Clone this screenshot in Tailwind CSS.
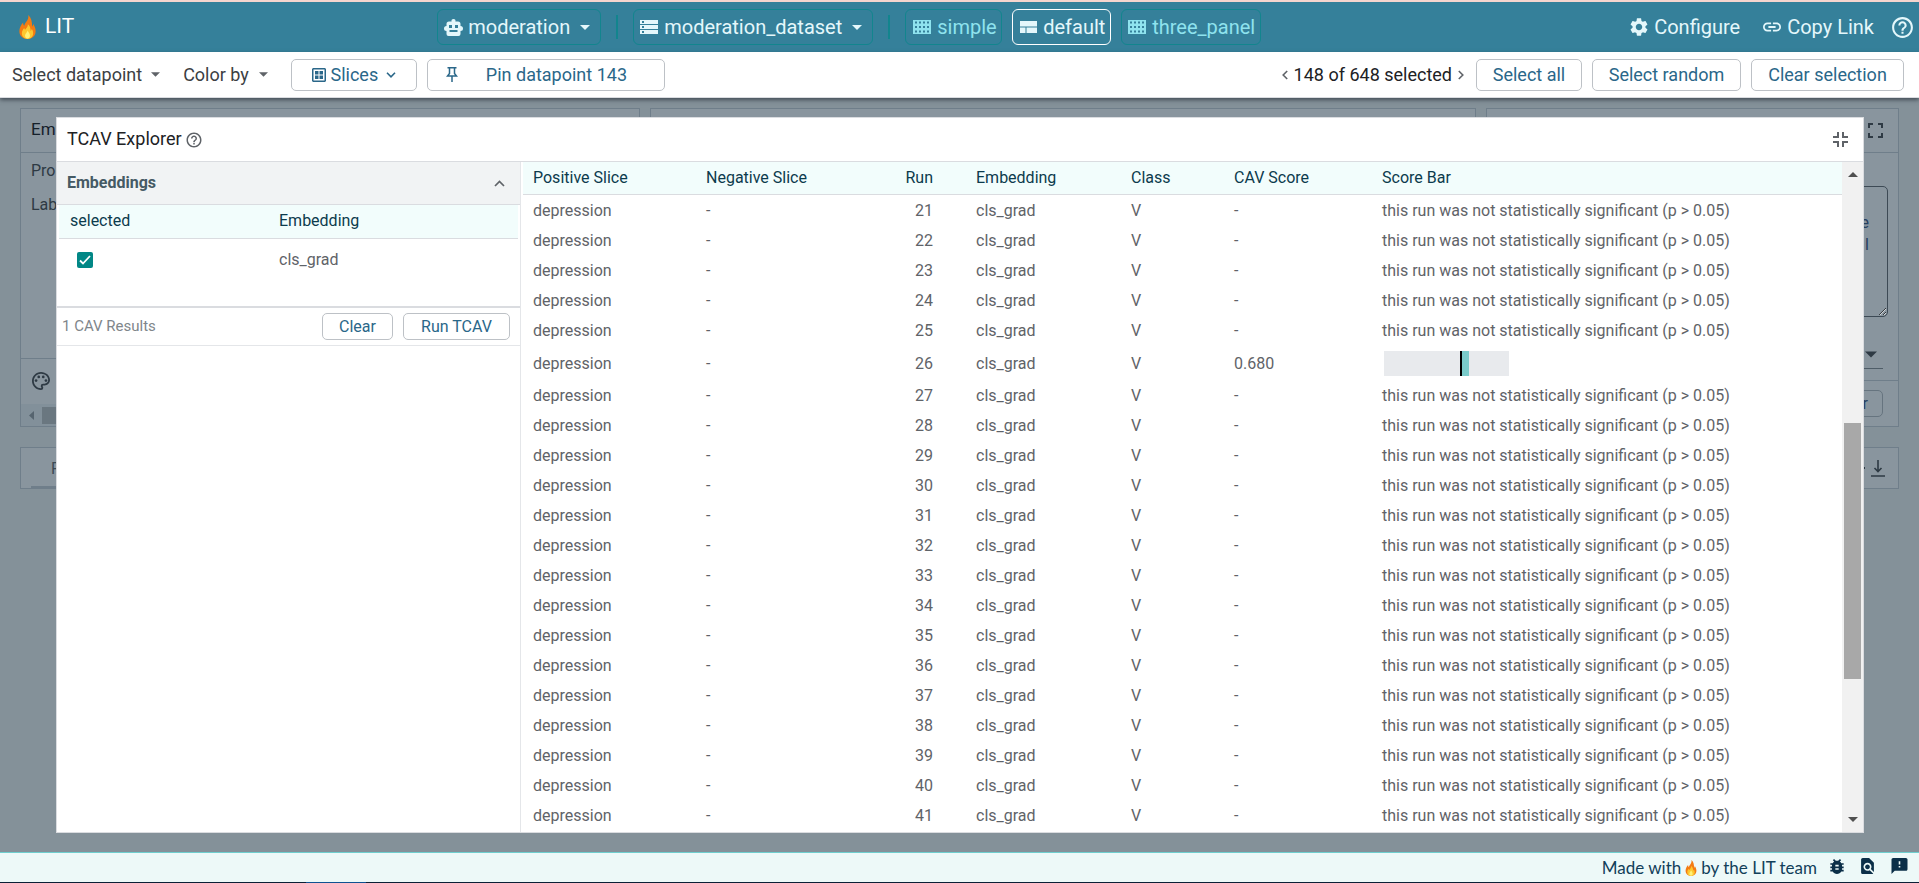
<!DOCTYPE html>
<html lang="en">
<head>
<meta charset="utf-8">
<title>LIT</title>
<script src="https://cdn.jsdelivr.net/npm/@tailwindcss/browser@4"></script>
</head>
<body class="h-screen flex flex-col overflow-hidden bg-white font-['Roboto',sans-serif] text-base">

<!-- Shared symbols -->
<svg class="hidden">
  <symbol id="flame" viewBox="0 0 24 34">
    <path fill="#f47b12" d="M13 0c1 5-1.500 8-4 11.500-.8 1.200-1.300 2.400-1.500 3.700C6.200 14.200 5.700 12.500 5.800 10.500 2.500 14 .5 18.500.5 23 .5 29.500 5.500 34 12 34s11.500-4.500 11.500-11c0-4-1.500-7.500-3.500-10.500 0 1.800-.4 3-1.400 4C18.500 9.500 17.500 4 13 0z"/>
    <path fill="#fdc72e" d="M12.500 13c.3 3.500-2 5.500-4 8-.6-.7-.9-1.500-1-2.500C5.500 20.500 4 23 4 26c0 4.500 3.500 8 8 8s8-3.300 8-8c0-2.500-.8-4.500-2-6-.2 1.200-.7 2-1.500 2.500 0-4-1.300-7.500-4-9.500z"/>
    <path fill="#fff176" d="M12 22c0 2.500-3.500 4-3.500 7.500 0 2.200 1.600 3.700 3.500 3.700s3.500-1.500 3.500-3.700C15.500 26.500 13.500 24.500 12 22z"/>
  </symbol>
  <symbol id="help" viewBox="0 0 24 24"><path fill="currentColor" d="M11 18h2v-2h-2v2zm1-16C6.480 2 2 6.480 2 12s4.480 10 10 10 10-4.480 10-10S17.520 2 12 2zm0 18c-4.410 0-8-3.590-8-8s3.590-8 8-8 8 3.590 8 8-3.590 8-8 8zm0-14c-2.210 0-4 1.790-4 4h2c0-1.100.9-2 2-2s2 .9 2 2c0 2-3 1.750-3 5h2c0-2.250 3-2.500 3-5 0-2.210-1.790-4-4-4z"/></symbol>
  <symbol id="caret" viewBox="0 0 10 5"><path fill="currentColor" d="M0 0h10L5 5z"/></symbol>
  <symbol id="grid" viewBox="0 0 18 14"><path fill="currentColor" fill-rule="evenodd" d="M0 0h18v14H0zM2 1.500v2h2v-2zM6 1.500v2h2v-2zM10 1.500v2h2v-2zM14 1.500v2h2v-2zM2 6v2h2V6zM6 6v2h2V6zM10 6v2h2V6zM14 6v2h2V6zM2 10.500v2h2v-2zM6 10.500v2h2v-2zM10 10.500v2h2v-2zM14 10.500v2h2v-2z"/></symbol>
</svg>

<div class="h-[2px] shrink-0 bg-[#f5d5ce]"></div>

<header class="h-[50px] shrink-0 flex items-center justify-between bg-[#35809a] pl-[19px] pr-[4px] text-[20px] text-[#e4f7fb]">
  <div class="flex items-center gap-[9px] text-white">
    <svg class="w-[17px] h-[24px]"><use href="#flame"/></svg>
    <span class="text-[21px]">LIT</span>
  </div>

  <nav class="flex items-center mr-[6px]">
    <button class="h-9 w-[164px] flex items-center rounded-md border border-[#12858e] pl-[6px] pr-[10px]">
      <svg class="w-[19px] h-[17px] mr-[5px]" viewBox="0 0 19 17"><path fill="currentColor" fill-rule="evenodd" d="M9.500 0a2 2 0 011.900 2.500H14A2.500 2.500 0 0116.500 5v2a2.500 2.500 0 010 5v3a2 2 0 01-2 2h-10a2 2 0 01-2-2v-3a2.500 2.500 0 010-5V5A2.500 2.500 0 015 2.500h2.600A2 2 0 019.500 0zM5 6v3h3V6zM11 6v3h3V6zM5.500 11v2h8v-2z"/></svg>
      <span>moderation</span>
      <svg class="w-[10px] h-[5px] ml-auto"><use href="#caret"/></svg>
    </button>
    <span class="w-[2px] h-6 mx-[15px] bg-[#12858e]"></span>
    <button class="h-9 w-[240px] flex items-center rounded-md border border-[#12858e] pl-[6px] pr-[10px]">
      <svg class="w-[18px] h-[14px] mr-[6px]" viewBox="0 0 18 14"><path fill="currentColor" fill-rule="evenodd" d="M0 0h18v4H0zM2 1v2h2V1zM0 5h18v4H0zM2 6v2h2V6zM0 10h18v4H0zM2 11v2h2v-2z"/></svg>
      <span>moderation_dataset</span>
      <svg class="w-[10px] h-[5px] ml-auto"><use href="#caret"/></svg>
    </button>
    <span class="w-[2px] h-6 mx-[15px] bg-[#12858e]"></span>
    <div class="flex gap-[10px]">
      <button class="h-9 w-[97px] flex items-center rounded-md border border-[#12858e] pl-[7px] gap-[6px] text-[#8fe3ee]">
        <svg class="w-[18px] h-[14px]"><use href="#grid"/></svg>simple
      </button>
      <button class="h-9 w-[99px] flex items-center rounded-md border border-white pl-[7px] gap-[6px]">
        <svg class="w-[17px] h-[12px]" viewBox="0 0 17 12"><path fill="currentColor" d="M0 0h17v5.500H0zM0 6.500h5.500V12H0zM6.500 6.500H17V12H6.500z"/></svg>default
      </button>
      <button class="h-9 w-[140px] flex items-center rounded-md border border-[#12858e] pl-[6px] gap-[6px] text-[#8fe3ee]">
        <svg class="w-[18px] h-[14px]"><use href="#grid"/></svg>three_panel
      </button>
    </div>
  </nav>

  <div class="flex items-center">
    <button class="flex items-center gap-[6px] mr-[23px]">
      <svg class="w-[18px] h-[18px]" viewBox="2 2 20 20"><path fill="currentColor" d="M19.140 12.940c.04-.3.060-.61.060-.94 0-.32-.02-.64-.07-.94l2.030-1.580c.18-.14.23-.41.12-.61l-1.920-3.320c-.12-.22-.37-.29-.59-.22l-2.390.96c-.5-.38-1.030-.7-1.620-.94l-.36-2.540c-.04-.24-.24-.41-.48-.41h-3.840c-.24 0-.43.17-.47.41l-.36 2.540c-.59.24-1.130.57-1.620.94l-2.390-.96c-.22-.08-.47 0-.59.22L2.740 8.870c-.12.21-.08.47.12.61l2.030 1.580c-.05.3-.09.63-.09.94s.02.64.070.94l-2.030 1.580c-.18.14-.23.41-.12.61l1.920 3.320c.12.22.37.29.59.22l2.390-.96c.5.38 1.030.7 1.620.94l.36 2.540c.05.24.24.41.48.41h3.840c.24 0 .44-.17.47-.41l.36-2.540c.59-.24 1.130-.56 1.620-.94l2.390.96c.22.080.47 0 .59-.22l1.920-3.320c.12-.22.070-.47-.12-.61l-2.010-1.580zM12 15.600c-1.980 0-3.600-1.620-3.600-3.600s1.620-3.600 3.600-3.600 3.600 1.620 3.600 3.600-1.620 3.600-3.600 3.600z"/></svg>
      Configure
    </button>
    <button class="flex items-center gap-[6px] mr-[16px]">
      <svg class="w-[18px] h-[10px]" viewBox="2 7 20 10"><path fill="currentColor" d="M3.900 12c0-1.710 1.390-3.100 3.100-3.100h4V7H7c-2.760 0-5 2.240-5 5s2.240 5 5 5h4v-1.900H7c-1.710 0-3.100-1.390-3.100-3.100zM8 13h8v-2H8v2zm9-6h-4v1.900h4c1.710 0 3.100 1.390 3.100 3.100s-1.390 3.100-3.100 3.100h-4V17h4c2.760 0 5-2.240 5-5s-2.240-5-5-5z"/></svg>
      Copy Link
    </button>
    <button aria-label="Help"><svg class="block w-[25px] h-[25px]"><use href="#help"/></svg></button>
  </div>
</header>

<div class="relative z-10 h-[46px] shrink-0 flex items-center justify-between border-b border-[#dadce0] bg-white pl-[12px] pr-[15px] text-[18px] text-[#3c4043] shadow-[0_2px_4px_rgba(40,48,58,0.7)]">
  <div class="flex items-center">
    <button class="flex items-center gap-[9px] mr-[23px]">Select datapoint <svg class="w-[9px] h-[5px] text-[#5f6368]"><use href="#caret"/></svg></button>
    <button class="flex items-center gap-[10px] mr-[23px]">Color by <svg class="w-[9px] h-[5px] text-[#5f6368]"><use href="#caret"/></svg></button>
    <button class="h-8 w-[126px] mr-[10px] flex items-center justify-center gap-[5px] rounded-[5px] border border-[#bdc1c6] text-[#2a6789]">
      <svg class="w-[14px] h-[14px]" viewBox="0 0 14 14" fill="currentColor"><path fill-rule="evenodd" d="M1 0h12l1 1v12l-1 1H1l-1-1V1zM1.500 1.500v11h11v-11z"/><path d="M3 3h3.500v3.500H3zM7.500 3H11v3.500H7.500zM3 7.500h3.500V11H3zM7.500 7.500H11V11H7.500z"/></svg>
      Slices
      <svg class="w-[10px] h-[6px] ml-[3px]" viewBox="0 0 10 6"><path fill="none" stroke="currentColor" stroke-width="1.600" d="M1 .8l4 4 4-4"/></svg>
    </button>
    <button class="h-8 w-[238px] flex items-center rounded-[5px] border border-[#bdc1c6] pl-[18px] gap-[28px] text-[#2a6789]">
      <svg class="w-[12px] h-[15px]" viewBox="0 0 12 15"><path fill="none" stroke="currentColor" stroke-width="1.500" d="M1.500 .8h9M3.500 1v5.500L1.500 9h9L8.500 6.500V1M6 9v6"/></svg>
      Pin datapoint 143
    </button>
  </div>
  <div class="flex items-center gap-[10px]">
    <div class="flex items-center gap-[6px] mr-[2px] text-[#202124]">
      <button aria-label="Previous datapoint"><svg class="w-[6px] h-[10px]" viewBox="0 0 6 10"><path fill="none" stroke="#5f6368" stroke-width="1.600" d="M5.200 1L1.200 5l4 4"/></svg></button>
      <span class="pb-px">148 of 648 selected</span>
      <button aria-label="Next datapoint"><svg class="w-[6px] h-[10px]" viewBox="0 0 6 10"><path fill="none" stroke="#5f6368" stroke-width="1.600" d="M.8 1l4 4-4 4"/></svg></button>
    </div>
    <button class="h-8 w-[106px] rounded-[5px] border border-[#bdc1c6] text-[#2a6789]">Select all</button>
    <button class="h-8 w-[149px] rounded-[5px] border border-[#bdc1c6] text-[#2a6789]">Select random</button>
    <button class="h-8 w-[153px] rounded-[5px] border border-[#bdc1c6] text-[#2a6789]">Clear selection</button>
  </div>
</div>

<main class="relative flex-1 min-h-0 bg-[#849199] px-5 pt-[10px] text-[#2e3a44]">
  <!-- Dimmed workspace behind the dialog -->
  <div class="grid grid-cols-[620fr_826fr_413fr] gap-[10px] h-[319px]">
    <section class="flex flex-col border border-[#6f7e8a] bg-[#89959e] overflow-hidden">
      <h2 class="h-[44px] shrink-0 border-b border-[#6f7e8a] pl-[10px] leading-[40px] text-[17px] text-[#15202a]">Em</h2>
      <div class="flex-1 pl-[10px] pt-[1px] leading-[34px]"><p>Pro</p><p>Lab</p></div>
      <div class="h-[46px] shrink-0 border-t border-[#6f7e8a] flex items-center pl-[11px] pb-[2px]">
        <svg class="w-[18px] h-[18px]" viewBox="2 2 20 20" fill="currentColor"><path d="M12 22C6.490 22 2 17.510 2 12S6.490 2 12 2s10 4.040 10 9c0 3.310-2.690 6-6 6h-1.770c-.28 0-.5.22-.5.5 0 .12.050.23.130.33.41.47.64 1.060.64 1.670A2.500 2.500 0 0112 22zm0-18c-4.410 0-8 3.590-8 8s3.590 8 8 8c.28 0 .5-.22.5-.5a.54.54 0 00-.14-.35c-.41-.46-.63-1.050-.63-1.650a2.500 2.500 0 012.500-2.500H16c2.210 0 4-1.790 4-4 0-3.860-3.590-7-8-7z"/><circle cx="6.500" cy="11.500" r="1.500"/><circle cx="9.500" cy="7.500" r="1.500"/><circle cx="14.500" cy="7.500" r="1.500"/><circle cx="17.500" cy="11.500" r="1.500"/></svg>
      </div>
      <div class="h-[22px] shrink-0 flex items-center bg-[#82909a] pl-[8px] gap-[8px]">
        <svg class="w-[5px] h-[9px]" viewBox="0 0 5 9"><path fill="#56646f" d="M5 0v9L0 4.500z"/></svg>
        <span class="h-[17px] w-80 bg-[#6a7780]"></span>
      </div>
    </section>
    <section class="border border-[#6f7e8a] bg-[#89959e]"></section>
    <section class="flex flex-col border border-[#6f7e8a] bg-[#89959e]">
      <div class="h-[44px] shrink-0 border-b border-[#6f7e8a] flex items-center justify-end pr-[15px]">
        <svg class="w-[15px] h-[15px]" viewBox="0 0 15 15"><path fill="none" stroke="currentColor" stroke-width="2" d="M1 5V1h4M10 1h4v4M14 10v4h-4M5 14H1v-4"/></svg>
      </div>
      <div class="flex-1 flex flex-col pt-[33px] pl-4 pr-[10px]">
        <textarea aria-label="Text" class="h-[131px] shrink-0 w-full rounded-[5px] border border-[#3d4a55] pt-[25px] pr-[18px] text-right text-[#274060] leading-[22px]">e
l</textarea>
        <div class="mr-[5px] mt-[17px] h-[35px] border-b border-[#4f5d68] flex items-center justify-end pr-[6px] pt-[6px]"><svg class="w-[12px] h-[7px]"><use href="#caret"/></svg></div>
      </div>
      <div class="h-[46px] shrink-0 border-t border-[#6f7e8a] flex items-center justify-end pr-[15px]">
        <button class="h-[27px] w-[70px] rounded-[5px] border border-[#66747f] text-[#274060] text-right pr-[14px]">r</button>
      </div>
    </section>
  </div>
  <section class="mt-5 h-[42px] border border-[#6f7e8a] bg-[#89959e] flex items-center justify-between pl-[10px] pr-[13px]">
    <div class="h-full w-52 border-b-2 border-[#6f7e8a] pl-[20px] leading-[42px] text-[#3c4a55]">P</div>
    <div class="flex items-center gap-[6px]">
      <span class="size-[2px] bg-[#2e3a44]"></span>
      <svg class="w-[14px] h-[17px]" viewBox="0 0 14 17"><path fill="none" stroke="currentColor" stroke-width="1.600" d="M7 0v11M3.500 8L7 11.500 10.500 8M0 16h14"/></svg>
    </div>
  </section>

  <!-- Dialog -->
  <div role="dialog" aria-label="TCAV Explorer" class="absolute left-14 right-[55px] top-[19px] bottom-[19px] flex flex-col border border-[#dadce0] bg-white">
    <div class="h-[44px] shrink-0 flex items-center justify-between border-b border-[#dadce0] pl-[10px] pr-[15px]">
      <div class="flex items-center gap-[3px]">
        <h1 class="pb-[2px] text-[18px] text-[#202124]">TCAV Explorer</h1>
        <svg class="w-[18px] h-[18px] text-[#5f6368]"><use href="#help"/></svg>
      </div>
      <button aria-label="Exit full screen"><svg class="w-[15px] h-[15px] text-[#5f6368]" viewBox="0 0 15 15"><path fill="none" stroke="currentColor" stroke-width="2" d="M5 0v5H0M10 0v5h5M15 10h-5v5M0 10h5v5"/></svg></button>
    </div>
    <div class="flex-1 min-h-0 flex">
      <aside class="w-[464px] shrink-0 border-r border-[#e4e6e9]">
        <button class="w-full h-[43px] flex items-center justify-between border-b border-[#dadce0] bg-[#f1f3f4] pl-[10px] pr-[15px] font-bold text-[#455a64]">
          Embeddings
          <svg class="w-[11px] h-[7px]" viewBox="0 0 11 7"><path fill="none" stroke="#5f6368" stroke-width="1.700" d="M1 6l4.500-4.500L10 6"/></svg>
        </button>
        <div class="h-[103px] px-[2px] border-b-2 border-[#dadce0]">
          <table class="w-full table-fixed text-left">
            <colgroup><col class="w-[210px]"><col></colgroup>
            <thead><tr class="h-[33px] border-b border-[#dadce0] bg-[#f2fdfc] text-[#0c3b4d]"><th class="pl-[11px] font-normal">selected</th><th class="pl-[10px] font-normal">Embedding</th></tr></thead>
            <tbody><tr class="h-[44px] text-[#5f6368]">
              <td class="pl-[18px]"><label class="relative block size-4"><input type="checkbox" checked aria-label="cls_grad selected" class="block size-4 appearance-none rounded-[2px] bg-[#018786]"><svg class="absolute inset-0 size-4" viewBox="0 0 16 16"><path fill="none" stroke="#fff" stroke-width="1.800" d="M3 8.500l3 3 7-7.500"/></svg></label></td>
              <td class="pl-[10px]">cls_grad</td>
            </tr></tbody>
          </table>
        </div>
        <div class="h-[38px] flex items-center border-b border-[#e4e6e9] pl-[5px] pr-[10px]">
          <span class="flex-1 text-[15px] text-[#80868b]">1 CAV Results</span>
          <button class="h-[27px] w-[71px] mr-[10px] rounded-[5px] border border-[#bdc1c6] text-[#2a6789]">Clear</button>
          <button class="h-[27px] w-[107px] rounded-[5px] border border-[#bdc1c6] text-[#2a6789]">Run TCAV</button>
        </div>
      </aside>
      <div class="flex-1 min-w-0 overflow-hidden pl-[2px]">
        <table class="w-full table-fixed text-left text-[#5f6368]">
          <colgroup><col class="w-[173px]"><col class="w-[184px]"><col class="w-[86px]"><col class="w-[155px]"><col class="w-[103px]"><col class="w-[148px]"><col></colgroup>
          <thead><tr class="h-[32px] border-b border-[#dadce0] bg-[#f2fdfc] text-[#0c3b4d]">
            <th class="pl-[10px] font-normal">Positive Slice</th><th class="pl-[10px] font-normal">Negative Slice</th><th class="pr-[33px] text-right font-normal">Run</th><th class="pl-[10px] font-normal">Embedding</th><th class="pl-[10px] font-normal">Class</th><th class="pl-[10px] font-normal">CAV Score</th><th class="pl-[10px] font-normal">Score Bar</th>
          </tr></thead>
          <tbody id="runs"></tbody>
        </table>
      </div>
      <div class="w-[21px] shrink-0 flex flex-col items-center justify-between bg-[#f1f1f1] pt-[10px] pb-[10px]">
        <svg class="w-[10px] h-[5px] rotate-180 text-[#505050]"><use href="#caret"/></svg>
        <div class="flex-1 flex flex-col w-[17px]">
          <span class="grow-[246]"></span><span class="grow-[256] bg-[#a8a8a8]"></span><span class="grow-[138]"></span>
        </div>
        <svg class="w-[10px] h-[5px] text-[#505050]"><use href="#caret"/></svg>
      </div>
    </div>
  </div>
</main>

<footer class="h-[30px] shrink-0 flex items-center justify-end border-t border-[#6fcfcf] bg-[#edf9f8] pr-[11px] text-[#12405a]">
  <span class="flex items-center gap-[4px] mr-[13px] font-['Lato',sans-serif] text-[17px]">Made with <svg class="w-[12px] h-[16px]"><use href="#flame"/></svg> by the LIT team</span>
  <div class="flex items-center gap-[17px] pb-[3px] text-[#0b2f48]">
    <a href="#bug" aria-label="Report a bug"><svg class="block w-[14px] h-[15px]" viewBox="4 3 16 18"><path fill="currentColor" d="M20 8h-2.810c-.45-.78-1.070-1.450-1.820-1.960L17 4.410 15.590 3l-2.170 2.170C12.960 5.060 12.490 5 12 5s-.96.060-1.410.17L8.410 3 7 4.410l1.620 1.630C7.880 6.550 7.260 7.220 6.810 8H4v2h2.090c-.05.33-.09.66-.09 1v1H4v2h2v1c0 .34.040.67.090 1H4v2h2.810c1.040 1.790 2.970 3 5.190 3s4.150-1.210 5.190-3H20v-2h-2.090c.05-.33.090-.66.090-1v-1h2v-2h-2v-1c0-.34-.04-.67-.09-1H20V8zm-6 8h-4v-2h4v2zm0-4h-4v-2h4v2z"/></svg></a>
    <a href="#docs" aria-label="Documentation"><svg class="block w-[13px] h-[16px]" viewBox="4 2 16 20"><path fill="currentColor" d="M20 19.590V8l-6-6H6c-1.100 0-2 .9-2 2v16c0 1.100.89 2 1.990 2H18c.45 0 .85-.15 1.190-.4l-4.430-4.430c-.8.52-1.740.83-2.760.83-2.760 0-5-2.240-5-5s2.240-5 5-5 5 2.240 5 5c0 1.020-.31 1.960-.83 2.750L20 19.590zM9 13c0 1.660 1.340 3 3 3s3-1.340 3-3-1.340-3-3-3-3 1.340-3 3z"/></svg></a>
    <a href="#feedback" aria-label="Feedback"><svg class="block w-[17px] h-[16px]" viewBox="2 2 20 20"><path fill="currentColor" d="M20 2H4c-1.100 0-1.990.9-1.990 2L2 22l4-4h14c1.100 0 2-.9 2-2V4c0-1.100-.9-2-2-2zm-7 12h-2v-2h2v2zm0-4h-2V6h2v4z"/></svg></a>
  </div>
</footer>
<div class="h-px shrink-0 bg-[#0b2036] pl-[306px]"><div class="h-px w-[60px] bg-[#0f5291]"></div></div>

<script>
  const scored = { 26: '0.680' };
  let html = '';
  for (let run = 21; run <= 41; run++) {
    const score = scored[run];
    const bar = score
      ? '<div class="flex h-[25px] w-[125px] ml-[2px] bg-[#e8eaed]"><span class="w-[2px] ml-[76px] bg-black"></span><span class="w-[7px] bg-[#7acbca]"></span></div>'
      : 'this run was not statistically significant (p &gt; 0.05)';
    html += `<tr class="${score ? 'h-[35px]' : 'h-[30px]'}"><td class="pl-[10px] pt-1">depression</td><td class="pl-[10px] pt-1">-</td><td class="pr-[33px] pt-1 text-right">${run}</td><td class="pl-[10px] pt-1">cls_grad</td><td class="pl-[10px] pt-1">V</td><td class="pl-[10px] pt-1">${score || '-'}</td><td class="pl-[10px] pt-1 whitespace-nowrap">${bar}</td></tr>`;
  }
  document.getElementById('runs').innerHTML = html;
</script>
</body>
</html>
